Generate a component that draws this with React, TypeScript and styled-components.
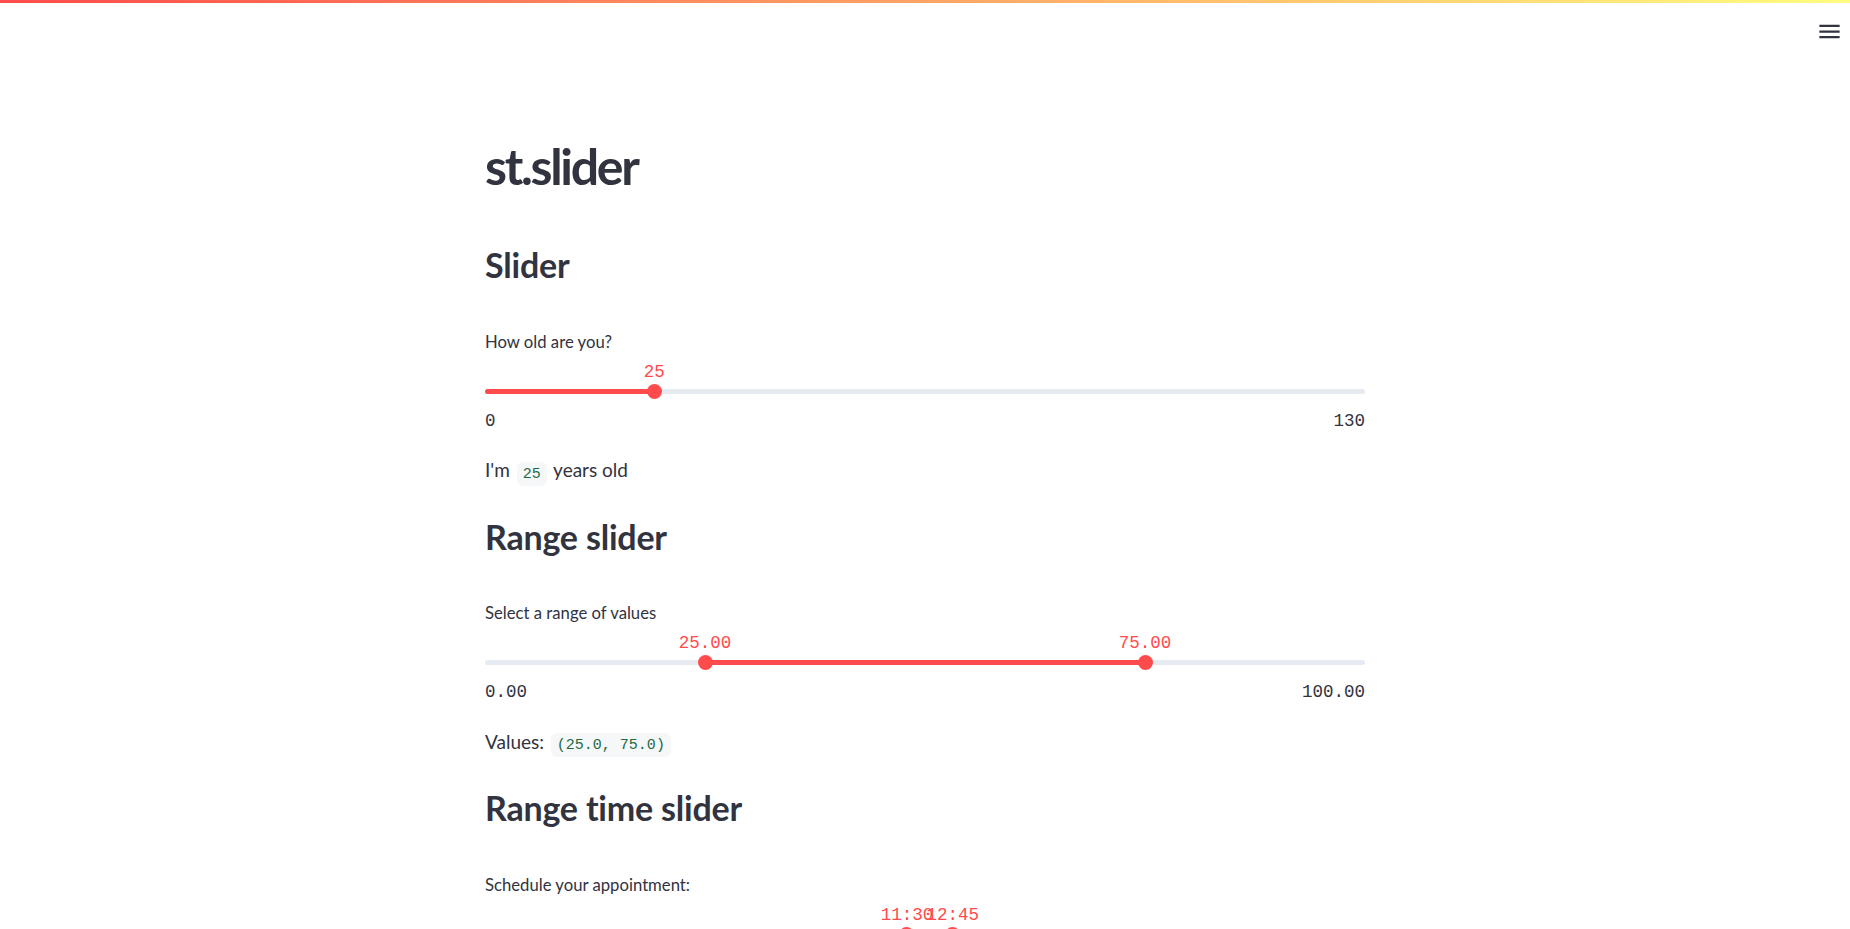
import React from "react";
import styled, { createGlobalStyle } from "styled-components";

const GlobalStyle = createGlobalStyle`
  html, body { margin: 0; padding: 0; background: #ffffff; overflow: hidden; }
  body { font-family: Lato, "Noto Sans", sans-serif; color: rgb(49, 51, 63); }
  * { box-sizing: border-box; }
`;

const Page = styled.div`
  display: flex;
  flex-direction: column;
  min-height: 100vh;
`;

const Decoration = styled.div`
  height: 3px;
  background: linear-gradient(90deg, rgb(255, 75, 75), rgb(255, 253, 128));
`;

const Header = styled.header`
  height: 57px;
  display: flex;
  justify-content: flex-end;
  align-items: flex-start;
  padding: 15px 7px 0 0;
`;

const MenuButton = styled.button`
  border: 0;
  background: none;
  padding: 0;
  width: 27px;
  height: 27px;
  color: rgb(49, 51, 63);
  display: flex;
  cursor: pointer;
  svg { display: block; }
`;

const Main = styled.main`
  width: 880px;
  margin: 0 auto;
  padding-top: 72.6px;
  display: flex;
  flex-direction: column;
`;

const Title = styled.h1`
  margin: 0;
  font-size: 50px;
  font-weight: 700;
  line-height: 66px;
  letter-spacing: -2.3px;
  color: rgb(49, 51, 63);
`;

const Heading = styled.h2<{ $gap: number }>`
  margin: ${(p) => p.$gap}px 0 0 0;
  font-size: 34px;
  font-weight: 700;
  line-height: 40px;
  letter-spacing: -0.2px;
  color: rgb(49, 51, 63);
`;

const Label = styled.label`
  display: block;
  margin-top: 44.6px;
  font-size: 16.7px;
  line-height: 24px;
  color: rgb(49, 51, 63);
`;

const Text = styled.p`
  margin: 23.5px 0 0 0;
  font-size: 19px;
  line-height: 32px;
  color: rgb(49, 51, 63);
`;

const Code = styled.code`
  font-family: "Liberation Mono", monospace;
  font-size: 15px;
  color: #1d6b45;
  background: #f6f7f9;
  padding: 3.5px 6px;
  border-radius: 6px;
  margin: 0 2px;
`;

const SliderWrap = styled.div`
  display: flex;
  flex-direction: column;
  margin-top: 8.3px;
`;

const ValueRow = styled.div`
  position: relative;
  height: 20px;
`;

const ValueLabel = styled.span`
  position: absolute;
  top: 0;
  transform: translateX(-50%);
  font-family: "Liberation Mono", monospace;
  font-size: 17.5px;
  line-height: 20px;
  color: #ff4b4b;
  white-space: nowrap;
`;

const TrackArea = styled.div`
  position: relative;
  height: 19px;
  display: flex;
  align-items: center;
`;

const Track = styled.div`
  flex: 1;
  height: 5px;
  border-radius: 3px;
  background: #e6eaf1;
`;

const Fill = styled.div`
  position: absolute;
  top: 7px;
  height: 5px;
  border-radius: 3px;
  background: #ff4b4b;
`;

const Thumb = styled.div`
  position: absolute;
  top: 2px;
  width: 15px;
  height: 15px;
  margin-left: -7.5px;
  border-radius: 50%;
  background: #ff4b4b;
`;

const Bounds = styled.div`
  display: flex;
  justify-content: space-between;
  margin-top: 10px;
  font-family: "Liberation Mono", monospace;
  font-size: 17.5px;
  line-height: 20px;
  color: rgb(49, 51, 63);
`;

type SliderProps = {
  min: number;
  max: number;
  values: number[];
  format: (v: number) => string;
};

function Slider({ min, max, values, format }: SliderProps) {
  const pct = (v: number) => ((v - min) / (max - min)) * 100;
  const start = values.length > 1 ? pct(values[0]) : 0;
  const end = pct(values[values.length - 1]);
  return (
    <SliderWrap>
      <ValueRow>
        {values.map((v, i) => (
          <ValueLabel key={i} style={{ left: `${pct(v)}%` }}>
            {format(v)}
          </ValueLabel>
        ))}
      </ValueRow>
      <TrackArea>
        <Track />
        <Fill style={{ left: `${start}%`, width: `${end - start}%` }} />
        {values.map((v, i) => (
          <Thumb key={i} style={{ left: `${pct(v)}%` }} />
        ))}
      </TrackArea>
      <Bounds>
        <span>{format(min)}</span>
        <span>{format(max)}</span>
      </Bounds>
    </SliderWrap>
  );
}

const fmtTime = (m: number) =>
  `${String(Math.floor(m / 60)).padStart(2, "0")}:${String(m % 60).padStart(2, "0")}`;

export default function App() {
  return (
    <>
      <GlobalStyle />
      <Page>
        <Decoration />
        <Header>
          <MenuButton aria-label="Main menu">
            <svg width="27" height="27" viewBox="0 0 24 24" fill="currentColor">
              <path d="M3 18h18v-2H3v2zm0-5h18v-2H3v2zm0-7v2h18V6H3z" />
            </svg>
          </MenuButton>
        </Header>
        <Main>
          <Title>st.slider</Title>

          <Heading $gap={46.4}>Slider</Heading>
          <Label>How old are you?</Label>
          <Slider min={0} max={130} values={[25]} format={(v) => String(v)} />
          <Text>
            I'm <Code>25</Code> years old
          </Text>

          <Heading $gap={26.2}>Range slider</Heading>
          <Label>Select a range of values</Label>
          <Slider min={0} max={100} values={[25, 75]} format={(v) => v.toFixed(2)} />
          <Text>
            Values: <Code>(25.0, 75.0)</Code>
          </Text>

          <Heading $gap={26.2}>Range time slider</Heading>
          <Label>Schedule your appointment:</Label>
          <Slider min={0} max={1439} values={[690, 765]} format={fmtTime} />
        </Main>
      </Page>
    </>
  );
}
